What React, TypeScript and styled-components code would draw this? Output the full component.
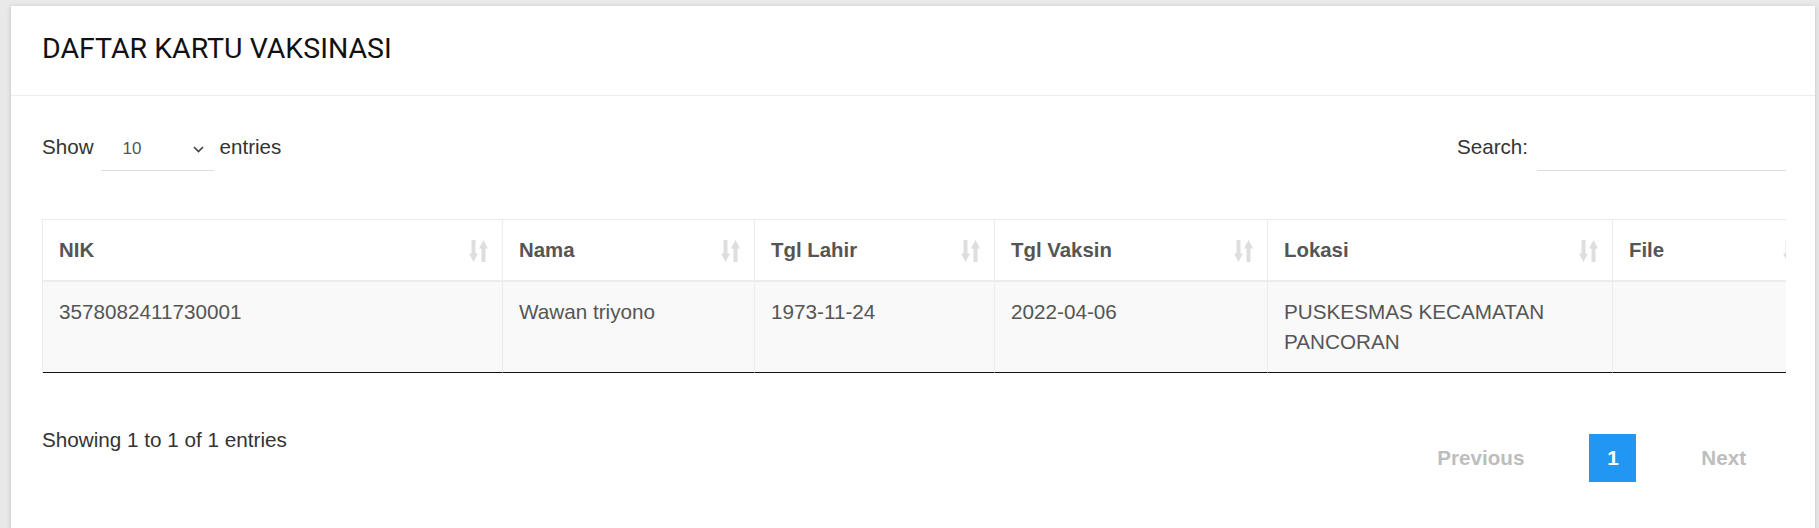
import styled, { createGlobalStyle } from 'styled-components';

const GlobalStyle = createGlobalStyle`
    html, body {
        margin: 0;
        padding: 0;
        background: #e9e9e9;
        font-family: "Liberation Sans", Arial, sans-serif;
        overflow: hidden;
    }
`;

interface Row {
    nik: string
    nama: string
    tglLahir: string
    tglVaksin: string
    lokasi: string
    file: string
}

const columns = [
    { label: 'NIK', width: 460 },
    { label: 'Nama', width: 252 },
    { label: 'Tgl Lahir', width: 240 },
    { label: 'Tgl Vaksin', width: 273 },
    { label: 'Lokasi', width: 345 },
    { label: 'File', width: 204 },
];

const rows: Row[] = [
    {
        nik: '3578082411730001',
        nama: 'Wawan triyono',
        tglLahir: '1973-11-24',
        tglVaksin: '2022-04-06',
        lokasi: 'PUSKESMAS KECAMATAN PANCORAN',
        file: '',
    },
];

const Card = styled.div`
    margin: 6px 0 0 11px;
    width: 1804px;
    min-height: 560px;
    background: #fff;
    box-shadow: 0 1px 5px rgba(0, 0, 0, 0.18);
`;
const CardHeader = styled.div`
    padding: 27px 31px 30px;
    border-bottom: 1px solid #ececec;
`;
const Title = styled.h3`
    margin: 0;
    font-family: Roboto, "Liberation Sans", Arial, sans-serif;
    font-size: 28.5px;
    font-weight: 400;
    line-height: 32px;
    color: #111;
`;
const CardBody = styled.div`
    padding: 34px 29px 60px 31px;
`;
const Controls = styled.div`
    display: flex;
    justify-content: space-between;
    align-items: flex-start;
`;
const ControlGroup = styled.label`
    display: flex;
    align-items: flex-end;
    font-size: 20.6px;
    line-height: 24px;
    color: #333;
`;
const ControlText = styled.span`
    padding-bottom: 12px;
`;
const SelectBox = styled.div`
    box-sizing: border-box;
    display: inline-flex;
    justify-content: space-between;
    align-items: flex-start;
    width: 113px;
    height: 41px;
    margin: 0 6px 0 7px;
    padding: 9px 10px 0 22px;
    border-bottom: 1px solid #ddd;
    font-size: 17px;
    line-height: 20px;
    color: #555;
`;
const Chevron = styled.svg`
    margin-top: 7px;
`;
const SearchInput = styled.div`
    box-sizing: border-box;
    width: 249px;
    height: 41px;
    margin-left: 9px;
    border-bottom: 1px solid #ddd;
`;
const TableWrap = styled.div`
    margin-top: 48px;
    width: 1744px;
    overflow: hidden;
`;
const Table = styled.table`
    table-layout: fixed;
    width: 1774px;
    border-collapse: separate;
    border-spacing: 0;
    border-left: 1px solid #ececec;
`;
const Th = styled.th`
    padding: 15px 14px 15px 16px;
    border-top: 1px solid #ececec;
    border-right: 1px solid #ececec;
    border-bottom: 2px solid #ececec;
    text-align: left;
    font-size: 20.4px;
    font-weight: 700;
    line-height: 30px;
    color: #555;
    background: #fff;
`;
const ThInner = styled.div`
    display: flex;
    justify-content: space-between;
    align-items: center;
`;
const SortIcon = styled.svg`
    flex-shrink: 0;
    margin-top: 2px;
`;
const Td = styled.td`
    padding: 15px 16px 15px;
    border-right: 1px solid #ececec;
    border-bottom: 1px solid #111;
    vertical-align: top;
    font-size: 20.7px;
    line-height: 30px;
    color: #555;
    background: #f9f9f9;
`;
const Footer = styled.div`
    display: flex;
    justify-content: space-between;
    align-items: flex-start;
    margin-top: 55px;
`;
const Info = styled.div`
    font-size: 20.7px;
    line-height: 24px;
    color: #333;
`;
const Pagination = styled.div`
    display: flex;
    align-items: center;
    gap: 65px;
    padding-top: 6px;
    margin-right: 40px;
`;
const PageLink = styled.span<{ $active?: boolean }>`
    display: flex;
    align-items: center;
    justify-content: center;
    font-size: 20.6px;
    font-weight: 700;
    color: ${p => (p.$active ? '#fff' : '#bdbdbd')};
    background: ${p => (p.$active ? '#2196f3' : 'transparent')};
    width: ${p => (p.$active ? '47px' : 'auto')};
    height: 48px;
`;

const Sort = () => (
    <SortIcon width="19" height="22" viewBox="0 0 19 22">
        <rect x="2.5" y="0" width="4" height="15" fill="#dedede" />
        <polygon points="0,13.5 9,13.5 4.5,22" fill="#dedede" />
        <polygon points="10,8.5 19,8.5 14.5,0" fill="#dedede" />
        <rect x="12.5" y="7" width="4" height="15" fill="#dedede" />
    </SortIcon>
);

const App = () => {
    return (
        <>
            <GlobalStyle />
            <Card>
                <CardHeader>
                    <Title>DAFTAR KARTU VAKSINASI</Title>
                </CardHeader>
                <CardBody>
                    <Controls>
                        <ControlGroup>
                            <ControlText>Show</ControlText>
                            <SelectBox>
                                <span>10</span>
                                <Chevron width="11" height="7" viewBox="0 0 11 7">
                                    <polyline points="1,1 5.5,5.5 10,1" fill="none" stroke="#444" strokeWidth="1.7" />
                                </Chevron>
                            </SelectBox>
                            <ControlText>entries</ControlText>
                        </ControlGroup>
                        <ControlGroup>
                            <ControlText>Search:</ControlText>
                            <SearchInput />
                        </ControlGroup>
                    </Controls>
                    <TableWrap>
                        <Table>
                            <colgroup>
                                {columns.map(c => <col key={c.label} style={{ width: c.width }} />)}
                            </colgroup>
                            <thead>
                                <tr>
                                    {columns.map(c => (
                                        <Th key={c.label}>
                                            <ThInner>
                                                <span>{c.label}</span>
                                                <Sort />
                                            </ThInner>
                                        </Th>
                                    ))}
                                </tr>
                            </thead>
                            <tbody>
                                {rows.map(r => (
                                    <tr key={r.nik}>
                                        <Td>{r.nik}</Td>
                                        <Td>{r.nama}</Td>
                                        <Td>{r.tglLahir}</Td>
                                        <Td>{r.tglVaksin}</Td>
                                        <Td>{r.lokasi}</Td>
                                        <Td>{r.file}</Td>
                                    </tr>
                                ))}
                            </tbody>
                        </Table>
                    </TableWrap>
                    <Footer>
                        <Info>Showing 1 to 1 of 1 entries</Info>
                        <Pagination>
                            <PageLink>Previous</PageLink>
                            <PageLink $active>1</PageLink>
                            <PageLink>Next</PageLink>
                        </Pagination>
                    </Footer>
                </CardBody>
            </Card>
        </>
    )
}

export default App
